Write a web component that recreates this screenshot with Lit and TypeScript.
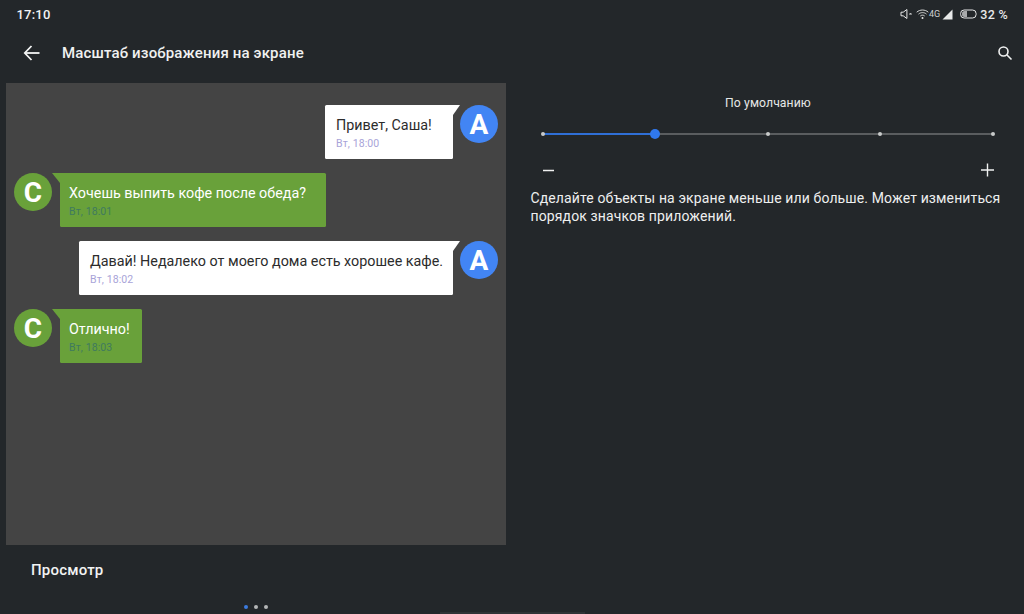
import { LitElement, html, css } from "lit";
import { customElement } from "lit/decorators.js";

const messages = [
  { me: true, text: "Привет, Саша!", time: "Вт, 18:00", width: 128 },
  { me: false, text: "Хочешь выпить кофе после обеда?", time: "Вт, 18:01", width: 266 },
  { me: true, text: "Давай! Недалеко от моего дома есть хорошее кафе.", time: "Вт, 18:02", width: 374 },
  { me: false, text: "Отлично!", time: "Вт, 18:03", width: 82 },
];

@customElement("app-root")
export class AppRoot extends LitElement {
  static styles = css`
    :host { display: block; width: 1024px; height: 614px; overflow: hidden; background: #23272a; color: #f2f3f3; font-family: Roboto, "Noto Sans", sans-serif; position: relative; }
    .status { height: 28px; display: flex; align-items: center; justify-content: space-between; padding: 0 16px 0 16.5px; font-size: 13px; font-weight: 500; letter-spacing: .2px; }
    .status-icons { display: flex; align-items: center; color: #e8e9e9; }
    .status-icons svg { display: block; }
    .speaker { margin-right: 3px; }
    .net { font-size: 9px; font-weight: 400; margin: 0 2px 0 0; color: #cfd1d2; letter-spacing: 0; }
    .batt { margin: 0 3px 0 7px; }
    .pct { font-size: 12.5px; letter-spacing: .3px; font-weight: 500; }
    .toolbar { height: 55px; box-sizing: border-box; display: flex; align-items: center; padding: 0 11px 6px 22.5px; }
    .toolbar h1 { margin: 0 0 0 21.5px; font-size: 15px; font-weight: 500; letter-spacing: .15px; flex: 1; color: #f0f1f1; }
    .toolbar svg { display: block; }
    .main { display: flex; height: 531px; }
    .left { width: 506px; flex: none; padding-left: 6px; box-sizing: border-box; display: flex; flex-direction: column; }
    .preview { width: 500px; height: 462px; flex: none; box-sizing: border-box; background: #444444; padding: 22px 8px 0; display: flex; flex-direction: column; gap: 14px; }
    .row { display: flex; align-items: flex-start; height: 54px; }
    .row.me { justify-content: flex-end; }
    .avatar { width: 38px; height: 38px; border-radius: 50%; flex: none; display: flex; align-items: center; justify-content: center; font-size: 28px; font-weight: 700; color: #fff; }
    .me .avatar { background: #4285f4; }
    .other .avatar { background: #69a13a; }
    .bubble-wrap { display: flex; align-items: flex-start; }
    .tail { height: 10px; flex: none; display: block; }
    .me .tail { width: 7px; }
    .other .tail { width: 8px; }
    .bubble { height: 54px; box-sizing: border-box; padding: 10px 0 0 9px; flex: none; }
    .me .bubble { background: #fff; color: #2c2c2c; border-radius: 1.5px 0 1.5px 1.5px; padding-left: 11px; }
    .other .bubble { background: #69a13a; color: #fff; border-radius: 0 1.5px 1.5px 1.5px; }
    .msg { font-size: 14.33px; line-height: 20px; white-space: nowrap; }
    .time { font-size: 10.5px; line-height: 18px; letter-spacing: .1px; }
    .me .time { color: #a8a3d8; }
    .other .time { color: #3f7a5f; }
    .caption { padding: 16px 0 0 25px; font-size: 15px; font-weight: 500; line-height: 18px; letter-spacing: .2px; color: #f2f3f3; }
    .dots { display: flex; gap: 6px; justify-content: center; margin-top: 26px; }
    .dot { width: 4px; height: 4px; border-radius: 50%; background: #b4b6b7; }
    .dot.on { background: #3b7be0; }
    .right { flex: 1; min-width: 0; padding: 0 22px 0 25px; display: flex; flex-direction: column; }
    .label { text-align: center; font-size: 12.2px; line-height: 14px; margin-top: 13px; padding-left: 3px; color: #e6e7e7; letter-spacing: .1px; }
    .slider { position: relative; margin: 22.5px 9px 0 11.5px; background: #5a5d5f; height: 2px; display: flex; }
    .fill { height: 2px; background: #2f6fd6; width: 25%; }
    .tick { position: absolute; top: -1px; width: 4px; height: 4px; margin-left: -2px; border-radius: 50%; background: #c8caca; }
    .thumb { position: absolute; top: -4px; width: 10px; height: 10px; margin-left: -5px; border-radius: 50%; background: #2f78ee; }
    .steppers { display: flex; justify-content: space-between; align-items: center; margin-top: 25.5px; height: 20px; padding: 0 7.5px 0 12px; }
    .steppers svg { display: block; }
    .desc { margin: 9px 0 0 -.5px; font-size: 14px; line-height: 18px; letter-spacing: .12px; color: #eeefef; width: 480px; }
    .home { position: absolute; left: 440px; bottom: 0; width: 145px; height: 2px; background: #2f3336; }
  `;

  private avatar(me: boolean) {
    return html`<div class="avatar">${me ? "A" : "C"}</div>`;
  }

  private row(m: { me: boolean; text: string; time: string; width: number }) {
    const body = html`<div class="bubble" style="width:${m.width}px"><div class="msg">${m.text}</div><div class="time">${m.time}</div></div>`;
    if (m.me) {
      return html`<div class="row me">
        <div class="bubble-wrap">${body}
          <svg class="tail" viewBox="0 0 7 10"><path d="M0 0H7L0 10Z" fill="#fff"/></svg>
        </div>
        ${this.avatar(true)}
      </div>`;
    }
    return html`<div class="row other">
      ${this.avatar(false)}
      <div class="bubble-wrap">
        <svg class="tail" viewBox="0 0 8 10"><path d="M8 0H0L8 10Z" fill="#69a13a"/></svg>
        ${body}
      </div>
    </div>`;
  }

  render() {
    const ticks = [0, 50, 75, 100];
    return html`
      <div class="status">
        <span>17:10</span>
        <div class="status-icons">
          <svg class="speaker" width="13" height="12" viewBox="0 0 13 12" fill="none" stroke="currentColor" stroke-width="1"><path d="M1 4.200V7.800H3.200L6.900 10.500V1.500L3.200 4.200Z"/><path d="M9.600 5L11.400 6.800M11.400 5L9.600 6.800" stroke-width=".9"/></svg>
          <svg width="13" height="11" viewBox="0 0 13 11" fill="none" stroke="currentColor" stroke-width=".9"><path d="M.7 3.200C4 .3 9 .3 12.300 3.200"/><path d="M2.500 5.100C4.800 3.100 8.200 3.100 10.500 5.100"/><path d="M4.300 7C5.500 5.900 7.500 5.900 8.700 7"/><circle cx="6.500" cy="9" r="1" fill="currentColor" stroke="none"/></svg>
          <span class="net">4G</span>
          <svg width="11" height="11" viewBox="0 0 11 11"><path d="M10.500 .5V10.500H.5Z" fill="currentColor"/></svg>
          <svg class="batt" width="17" height="10" viewBox="0 0 17 10" fill="none"><rect x=".6" y="1" width="15.500" height="8" rx="3.500" stroke="currentColor" stroke-width="1"/><path d="M4.500 2H7V8H4.500A2.500 2.500 0 0 1 2 5.500V4.500A2.500 2.500 0 0 1 4.500 2Z" fill="#a9abac"/></svg>
          <span class="pct">32 %</span>
        </div>
      </div>
      <div class="toolbar">
        <svg width="18" height="18" viewBox="0 0 18 18" fill="none" stroke="#f4f5f5" stroke-width="1.800"><path d="M16.500 9H2"/><path d="M8.500 2L1.800 9L8.500 16"/></svg>
        <h1>Масштаб изображения на экране</h1>
        <svg width="16" height="16" viewBox="0 0 16 16" fill="none" stroke="#f0f1f1" stroke-width="1.600"><circle cx="6.500" cy="6.500" r="4.500"/><path d="M10 10L14.500 14.500"/></svg>
      </div>
      <div class="main">
        <div class="left">
          <div class="preview">${messages.map((m) => this.row(m))}</div>
          <div class="caption">Просмотр</div>
          <div class="dots"><span class="dot on"></span><span class="dot"></span><span class="dot"></span></div>
        </div>
        <div class="right">
          <div class="label">По умолчанию</div>
          <div class="slider">
            <div class="fill"></div>
            ${ticks.map((t) => html`<span class="tick" style="left:${t}%"></span>`)}
            <span class="thumb" style="left:25%"></span>
          </div>
          <div class="steppers">
            <svg width="12" height="12" viewBox="0 0 12 12"><path d="M0 6.500H11" stroke="#f0f1f1" stroke-width="1.500"/></svg>
            <svg width="14" height="14" viewBox="0 0 14 14"><path d="M0 7H13M6.500 .5V13.500" stroke="#f0f1f1" stroke-width="1.400"/></svg>
          </div>
          <p class="desc">Сделайте объекты на экране меньше или больше. Может измениться порядок значков приложений.</p>
        </div>
      </div>
      <div class="home"></div>
    `;
  }
}
